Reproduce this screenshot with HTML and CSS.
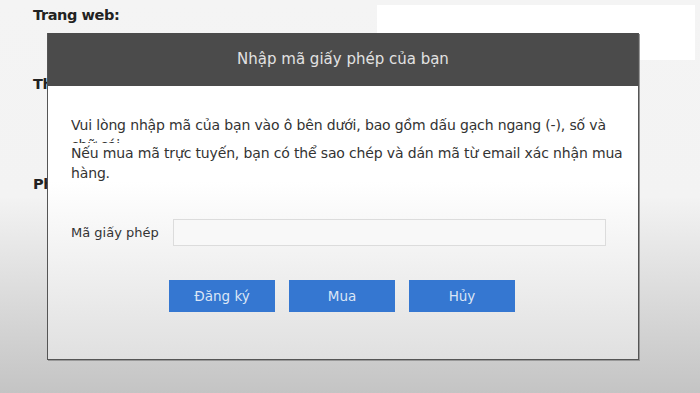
FILE: index.html
```html
<!DOCTYPE html>
<html lang="vi">
<head>
<meta charset="utf-8">
<title>Nhập mã giấy phép</title>
<link rel="stylesheet" href="styles.css">
</head>
<body>
<div class="page">
  <div class="info">
    <div class="field-title">Trang web:</div>
    <div class="link">https://www.example-software.com/mua-hang</div>
    <div class="field-title second">Thông tin:</div>
    <div class="field-title third">Phiên bản:</div>
  </div>
  <div class="whitebox"></div>
</div>

<div class="dialog">
  <div class="dialog-header">Nhập mã giấy phép của bạn</div>
  <div class="dialog-body">
    <p class="msg clipped">Vui lòng nhập mã của bạn vào ô bên dưới, bao gồm dấu gạch ngang (-), số và chữ cái.</p>
    <p class="msg">Nếu mua mã trực tuyến, bạn có thể sao chép và dán mã từ email xác nhận mua hàng.</p>
    <div class="row">
      <label class="label" for="code">Mã giấy phép</label>
      <input class="input" id="code" type="text">
    </div>
    <div class="buttons">
      <button class="btn">Đăng ký</button>
      <button class="btn">Mua</button>
      <button class="btn">Hủy</button>
    </div>
  </div>
</div>
</body>
</html>
```
FILE: styles.css
```css
html, body {
  margin: 0;
  padding: 0;
}
body {
  width: 700px;
  height: 393px;
  overflow: hidden;
  position: relative;
  background: linear-gradient(#f4f4f4 0, #f3f3f3 50%, #c4c4c4 100%);
  font-family: "DejaVu Sans", "Noto Sans", sans-serif;
}
.page {
  display: flex;
  padding: 5px 5px 0 33px;
}
.info {
  display: flex;
  flex-direction: column;
}
.field-title {
  font-weight: bold;
  font-size: 14.5px;
  line-height: 20px;
  color: #222;
  letter-spacing: -0.4px;
}
.second { margin-top: 26px; }
.third { margin-top: 80px; }
.link {
  margin-top: 5px;
  padding-left: 14px;
  font-size: 13px;
  line-height: 18px;
  color: #6a7fb0;
}
.whitebox {
  margin-left: auto;
  width: 318px;
  height: 55px;
  background: #ffffff;
}
.dialog {
  position: absolute;
  left: 47px;
  top: 33px;
  width: 590px;
  height: 326px;
  border: 1px solid #555;
  border-top: none;
  box-shadow: 1px 1px 0 #999;
  display: flex;
  flex-direction: column;
}
.dialog-header {
  height: 53px;
  background: #4b4b4b;
  color: #e2e2e2;
  font-size: 15px;
  display: flex;
  align-items: center;
  justify-content: center;
  padding-bottom: 1px;
  box-sizing: border-box;
}
.dialog-body {
  flex: 1;
  background: linear-gradient(#ffffff 0, #ffffff 35%, #e0e0e0 100%);
  padding: 29px 0 0 23px;
  color: #333;
  font-size: 13px;
}
.msg {
  margin: 0;
  font-size: 14px;
  line-height: 20px;
  width: 556px;
  letter-spacing: -0.15px;
}
.clipped {
  height: 28px;
  overflow: hidden;
}
.row {
  display: flex;
  align-items: center;
  margin-top: 36px;
}
.label {
  width: 102px;
  color: #333;
}
.input {
  width: 433px;
  height: 27px;
  box-sizing: border-box;
  border: 1px solid #dcdcdc;
  background: #f8f8f8;
  margin: 0;
  padding: 0 4px;
}
.buttons {
  display: flex;
  gap: 14px;
  margin-top: 34px;
  padding-left: 98px;
}
.btn {
  width: 106px;
  height: 32px;
  border: none;
  background: #3577d1;
  color: #dbe6f6;
  font-family: "DejaVu Sans", "Noto Sans", sans-serif;
  font-size: 13.5px;
  padding: 0;
}
```
